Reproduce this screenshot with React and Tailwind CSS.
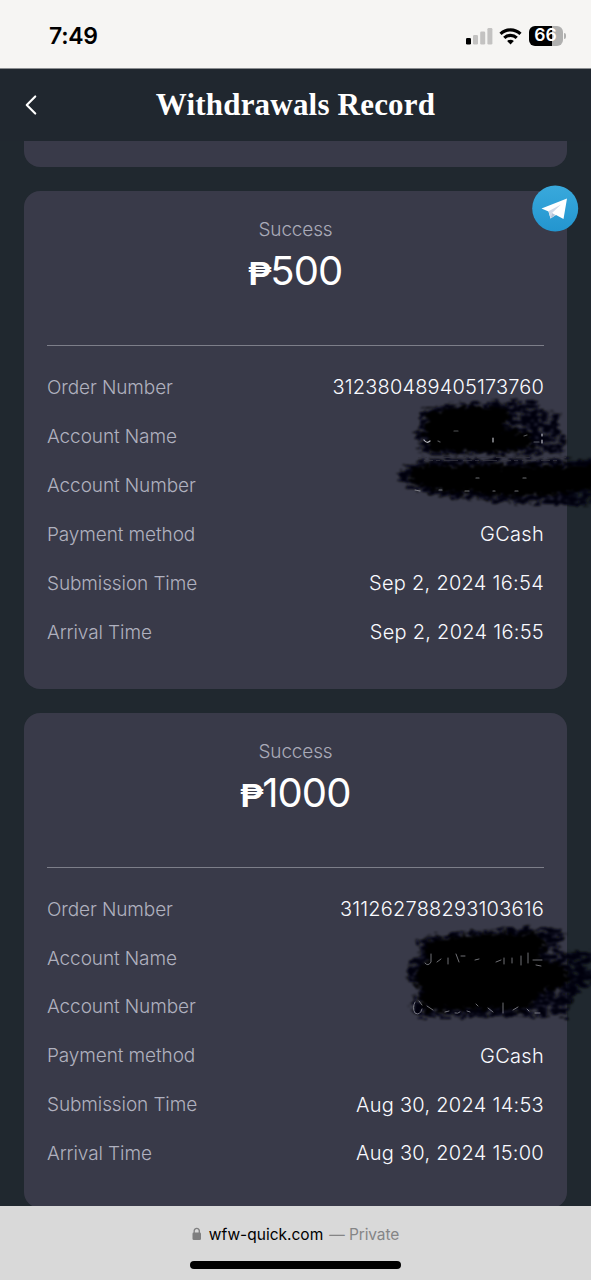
import { ChevronLeft } from "lucide-react";

const records = [
  {
    status: "Success",
    amount: "500",
    order: "312380489405173760",
    orderClass: "tracking-[0.15px]",
    method: "GCash",
    submitted: "Sep 2, 2024 16:54",
    arrived: "Sep 2, 2024 16:55",
    cover: "first",
  },
  {
    status: "Success",
    amount: "1000",
    order: "311262788293103616",
    orderClass: "tracking-[0.2px]",
    method: "GCash",
    submitted: "Aug 30, 2024 14:53",
    arrived: "Aug 30, 2024 15:00",
    cover: "second",
  },
];

function StatusBar() {
  return (
    <div className="flex h-[69px] shrink-0 items-center justify-between border-b border-[#8b8d90] bg-[#f6f5f3] pt-[3px] pr-[25px] pl-[49px]">
      <span className="mt-[2px] text-[23px] font-semibold tracking-[-0.3px] text-black">
        7:49
      </span>
      <div className="flex items-center">
        <svg width="28" height="18" viewBox="0 0 28 18">
          <rect x="1" y="11" width="5" height="6.5" rx="1.3" fill="#000" />
          <rect x="8" y="8" width="5" height="9.5" rx="1.3" fill="#c3c2c1" />
          <rect x="15.2" y="4.5" width="5" height="13" rx="1.3" fill="#c3c2c1" />
          <rect x="22.4" y="1" width="5" height="16.5" rx="1.3" fill="#c3c2c1" />
        </svg>
        <svg className="ml-[6px]" width="23" height="18" viewBox="0 0 24 18">
          <g fill="none" stroke="#000" strokeWidth="3.3">
            <path d="M1.6 6.8C7.4 1.1 16.6 1.1 22.4 6.8" />
            <path d="M5.5 11c3.6-3.5 9.4-3.5 13 0" />
          </g>
          <path d="M8.5 14.2c2-1.6 5-1.6 7 0l-3.5 3.6z" fill="#000" />
        </svg>
        <div className="ml-[7px] flex h-5 w-[34px] items-center justify-center rounded-md bg-[linear-gradient(90deg,#000_67%,#b0b0af_67%)] text-[17.5px] font-semibold text-white">
          <span className="ml-[-1px]">66</span>
        </div>
        <div className="ml-px h-[6px] w-[2px] rounded-r-full bg-[#b0b0af]" />
      </div>
    </div>
  );
}

function Header() {
  return (
    <header className="relative z-10 flex h-[72px] shrink-0 items-center justify-center bg-[#20272f]">
      <ChevronLeft
        className="absolute top-[19px] left-[14px] h-[34px] w-[34px] text-white"
        strokeWidth={1.5}
      />
      <h1 className="font-['Liberation_Serif',serif] text-[31px] font-bold tracking-[0.2px] text-white">
        Withdrawals Record
      </h1>
    </header>
  );
}

// Rough edges for the ink body, plus a grainy version for the dry rim
function BrushFilters({ id, seed }) {
  return (
    <defs>
      <filter id={`${id}-body`} x="-10%" y="-20%" width="120%" height="140%">
        <feTurbulence type="fractalNoise" baseFrequency="0.16 0.3" numOctaves="3" seed={seed} result="n" />
        <feDisplacementMap in="SourceGraphic" in2="n" scale="16" xChannelSelector="R" yChannelSelector="G" result="d" />
        <feGaussianBlur in="d" stdDeviation="1.2" />
      </filter>
      <filter id={`${id}-rim`} x="-10%" y="-20%" width="120%" height="140%">
        <feTurbulence type="fractalNoise" baseFrequency="0.1 0.3" numOctaves="3" seed={seed} result="n" />
        <feDisplacementMap in="SourceGraphic" in2="n" scale="14" xChannelSelector="R" yChannelSelector="G" result="d" />
        <feTurbulence type="fractalNoise" baseFrequency="0.13 0.24" numOctaves="3" seed={seed + 4} result="g" />
        <feColorMatrix in="g" type="matrix" values="0 0 0 0 0  0 0 0 0 0  0 0 0 0 0  4 0 0 0 -1.1" result="holes" />
        <feComposite in="d" in2="holes" operator="in" result="c" />
        <feGaussianBlur in="c" stdDeviation="0.8" />
      </filter>
    </defs>
  );
}

// Dry brush strokes painted over the account values
function Scribble({ variant }) {
  if (variant === "first") {
    return (
      <svg
        className="absolute top-[200px] left-[366px]"
        width="201"
        height="125"
        viewBox="390 391 201 125"
      >
        <BrushFilters id="first" seed={8} />
        <g filter="url(#first-rim)" fill="#050508">
          <path d="M420 410L450 404L505 401L534 401L541 409L560 414L556 425L566 440L560 454L480 455L419 454L421 444L415 434L420 424Z" />
          <path d="M400 470L419 459L600 459L600 505L540 505L490 501L440 497L416 492L398 480Z" />
        </g>
        <g filter="url(#first-body)" fill="#020203">
          <path d="M428 412L470 406L506 408L509 418L502 428L530 434L533 446L505 452L430 451L424 436Z" />
          <path d="M410 470L430 465L600 466L600 487L560 494L510 496L430 490L409 480Z" />
        </g>
        <g stroke="#34343f" strokeWidth="1" strokeDasharray="9 3 4 4 14 5" opacity=".8">
          <path d="M418 457.5H566M424 460.5H560" />
        </g>
        <g stroke="#b9bac2" strokeWidth="1.2" fill="none" strokeLinecap="round">
          <path d="M424 440q3 4 6 1M493 438v4M542 434v2M542 440v3" />
          <path d="M454 431h4M438 441l2 1M524 436l3-1M534 442h5" opacity=".45" />
          <path d="M465 491h4M515 491h3M415 490l5 1M439 490h3M476 478h3M523 478h3M493 491h2" opacity=".6" />
        </g>
      </svg>
    );
  }

  return (
    <svg
      className="absolute top-[203px] left-[376px]"
      width="191"
      height="118"
      viewBox="400 915 191 118"
    >
      <BrushFilters id="second" seed={21} />
      <g filter="url(#second-rim)" fill="#050508">
        <path d="M419 937L458 931L510 927L558 926L566 935L557 950L600 951L586 965L598 978L584 988L572 995L567 1016L414 1016L410 1003L420 990L405 976L409 960L424 952L416 944Z" />
      </g>
      <g filter="url(#second-body)" fill="#010102">
        <path d="M426 940L470 934L538 932L546 944L538 958L566 964L570 980L548 990L534 998L530 1008L424 1010L421 989L414 974L426 960Z" />
      </g>
      {/* leftover flecks between the strokes */}
      <g stroke="#babbc3" strokeWidth="1" fill="none" strokeLinecap="round" opacity=".6">
        <path d="M431 953v8q-3 5-6 1M437 961l4-3M448 957v6M456 953l3 8M461 955h4M475 959l4-1M496 961l5-2M504 957v6M512 962v-5M521 955v9M528 952v10M533 959h9M536 964l5 1" />
        <path d="M415 1001q-3 6 0 11 5 3 7-4M419 1000l3 4M427 1005l6 4M445 1011l4-1M455 1012q3 1 5-1M467 1010l3 1M476 1003l2 2M488 1007l5 4M503 1002v10M513 1009l5-3M527 1008l2 2M535 1012h5" />
      </g>
    </svg>
  );
}

function Row({ label, value, valueClass = "tracking-[0.28px]" }) {
  return (
    <div className="flex h-[48.9px] items-center justify-between">
      <span className="mt-[2px] text-[19px] font-light tracking-[-0.1px] text-[#b0b1bf]">
        {label}
      </span>
      <span className={`text-[20px] font-light text-[#fafaff] ${valueClass}`}>
        {value}
      </span>
    </div>
  );
}

function RecordCard({ record }) {
  return (
    <section className="relative h-[497.5px] shrink-0 rounded-2xl bg-[#393a49] px-[23px] pt-[26px] last:h-[495px]">
      <p className="relative top-px text-center text-[19px] leading-6 font-light tracking-[-0.15px] text-[#a9aab8]">
        {record.status}
      </p>
      <div className="mt-[6px] flex h-12 items-baseline justify-center text-white">
        <span className="mr-[-1px] font-['Liberation_Sans',sans-serif] text-[34px] leading-[48px] font-bold">
          ₱
        </span>
        <span className="text-[40px] leading-[48px] tracking-[-0.9px]">
          {record.amount}
        </span>
      </div>
      <div className="mt-[50px] mb-[17px] h-px bg-[#7d7e89]" />
      <Row label="Order Number" value={record.order} valueClass={record.orderClass} />
      <Row label="Account Name" />
      <Row label="Account Number" />
      <Row label="Payment method" value={record.method} />
      <Row label="Submission Time" value={record.submitted} />
      <Row label="Arrival Time" value={record.arrived} />
      <Scribble variant={record.cover} />
    </section>
  );
}

function TelegramButton() {
  return (
    <button className="absolute top-[185px] left-[532px] z-20 h-[47px] w-[47px]">
      <svg width="47" height="47" viewBox="0 0 47 47">
        <defs>
          <linearGradient id="tg" x1="0" y1="0" x2="0" y2="1">
            <stop offset="0" stopColor="#39a9dc" />
            <stop offset="1" stopColor="#2395cf" />
          </linearGradient>
        </defs>
        <circle cx="23.2" cy="23.5" r="23" fill="url(#tg)" />
        <path d="M9.5 23.5L35 13.5L31.5 34L24 30L18.5 33.5L16.5 26.5Z" fill="#fff" />
        <path d="M16.5 26.2L29 19.5L20 28L18.5 33.5Z" fill="#d0d9e8" />
        <path d="M20 28L23.5 30L18.5 33.5Z" fill="#b3c3d8" />
      </svg>
    </button>
  );
}

function BrowserBar() {
  return (
    <footer className="relative z-10 flex h-[74px] shrink-0 flex-col items-center bg-[#d9d9d9]">
      <div className="mt-[18px] flex h-5 items-center text-[15.5px]">
        <svg width="10" height="14" viewBox="0 0 10 14">
          <rect x="0.5" y="5.5" width="8.5" height="7.5" rx="1.3" fill="#7e7e7f" />
          <path d="M2.2 6V3.6a2.6 2.8 0 0 1 5.1 0V6" fill="none" stroke="#7e7e7f" strokeWidth="1.3" />
        </svg>
        <span className="mt-px ml-[7px] text-black">wfw-quick.com</span>
        <span className="mt-px ml-[6px] tracking-[-0.1px] text-[#858586]">— Private</span>
      </div>
      <div className="mt-[17px] h-[8px] w-[211px] shrink-0 rounded-full bg-black" />
    </footer>
  );
}

export default function App() {
  return (
    <div className="relative flex h-[1280px] w-[591px] flex-col overflow-hidden bg-[#20282f] font-['Inter',sans-serif]">
      <StatusBar />
      <Header />
      <main className="flex h-[1065px] shrink-0 flex-col gap-6 overflow-hidden px-6">
        <div className="h-[26px] shrink-0 rounded-b-2xl bg-[#393a49]" />
        {records.map((record) => (
          <RecordCard key={record.order} record={record} />
        ))}
      </main>
      <TelegramButton />
      <BrowserBar />
    </div>
  );
}
